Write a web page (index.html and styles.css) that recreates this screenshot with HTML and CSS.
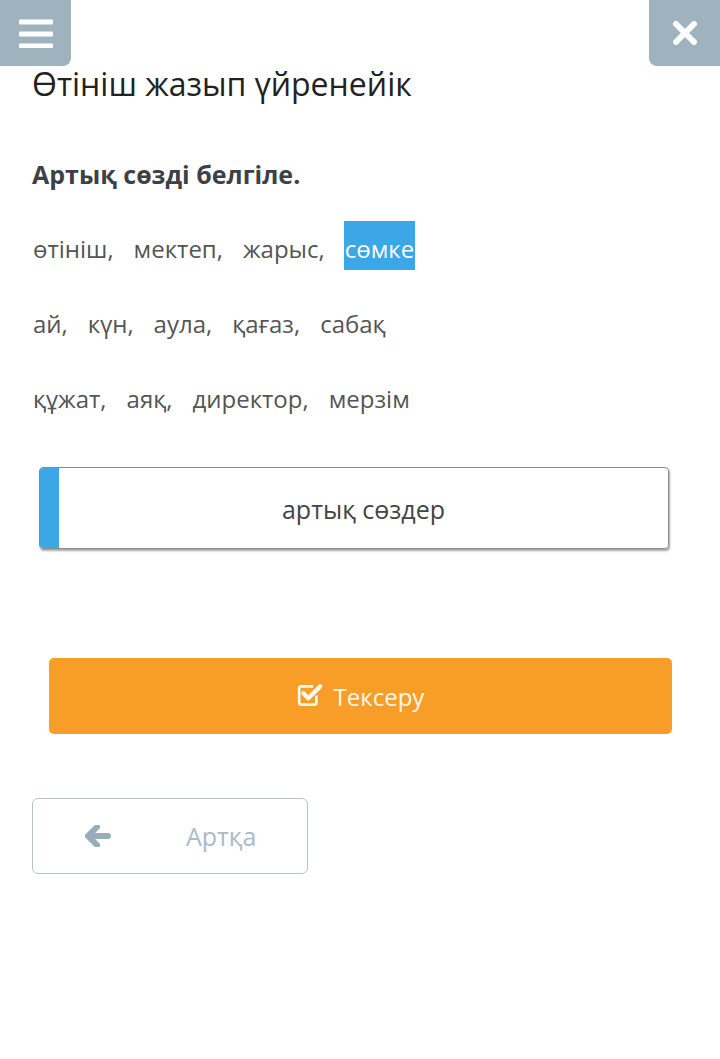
FILE: index.html
```html
<!DOCTYPE html>
<html lang="kk">
<head>
  <meta charset="UTF-8"/>
  <meta name="viewport" content="width=device-width, initial-scale=1.0"/>
  <title>Өтініш жазып үйренейік</title>
  <link rel="stylesheet" href="styles.css">
</head>
<body>
  <button class="corner-btn menu-btn" aria-label="Menu">
    <svg viewBox="0 0 34 28" class="menu-icon">
      <rect x="0" y="0" width="34" height="5" rx="1"/>
      <rect x="0" y="12" width="34" height="5" rx="1"/>
      <rect x="0" y="24" width="34" height="5" rx="1"/>
    </svg>
  </button>
  <button class="corner-btn close-btn" aria-label="Close">
    <svg viewBox="0 0 26 26" class="close-icon">
      <path d="M4 4 L22 22 M22 4 L4 22"/>
    </svg>
  </button>

  <main>
    <h1 class="title">Өтініш жазып үйренейік</h1>
    <p class="task">Артық сөзді белгіле.</p>

    <div class="rows">
      <div class="row">
        <span class="word">өтініш,</span>
        <span class="word">мектеп,</span>
        <span class="word">жарыс,</span>
        <span class="word selected">сөмке</span>
      </div>
      <div class="row">
        <span class="word">ай,</span>
        <span class="word">күн,</span>
        <span class="word">аула,</span>
        <span class="word">қағаз,</span>
        <span class="word">сабақ</span>
      </div>
      <div class="row">
        <span class="word">құжат,</span>
        <span class="word">аяқ,</span>
        <span class="word">директор,</span>
        <span class="word">мерзім</span>
      </div>
    </div>

    <div class="answer-box">
      <div class="answer-bar"></div>
      <div class="answer-text">артық сөздер</div>
    </div>

    <button class="check-btn">
      <svg viewBox="0 0 26 24" class="check-icon">
        <path class="box" d="M18 12.5 V19 a2 2 0 0 1 -2 2 H4 a2 2 0 0 1 -2 -2 V6 a2 2 0 0 1 2 -2 H15"/>
        <path class="tick" d="M6 10.5 L10.5 15 L21.5 4"/>
      </svg>
      Тексеру
    </button>

    <button class="back-btn">
      <svg viewBox="0 0 26 22" class="back-icon">
        <path d="M12 2 L3 11 L12 20 M4 11 H23"/>
      </svg>
      <span>Артқа</span>
    </button>
  </main>
</body>
</html>
```

FILE: styles.css
```css
* {
  margin: 0;
  padding: 0;
  box-sizing: border-box;
}

body {
  font-family: 'Open Sans', 'Noto Sans', sans-serif;
  background: #fff;
  color: #222;
  width: 720px;
  min-height: 1059px;
  position: relative;
}

button {
  font-family: inherit;
  cursor: pointer;
}

/* Top corner buttons lie over the page */
.corner-btn {
  position: absolute;
  top: 0;
  width: 71px;
  height: 66px;
  border: none;
  background: #9fb3bf;
  display: flex;
  align-items: center;
  justify-content: center;
}

.menu-btn {
  left: 0;
  border-radius: 0 0 8px 0;
}

.close-btn {
  right: 0;
  border-radius: 0 0 0 8px;
}

.menu-icon {
  width: 34px;
  height: 29px;
  fill: #fff;
}

.close-icon {
  width: 26px;
  height: 26px;
  stroke: #fff;
  stroke-width: 6;
  stroke-linecap: round;
  fill: none;
}

main {
  padding: 0 32px 0 32px;
}

.title {
  font-size: 32px;
  font-weight: 400;
  line-height: 42px;
  margin-top: 63px;
  color: #222;
}

.task {
  font-size: 25px;
  font-weight: 700;
  line-height: 32px;
  margin-top: 53px;
  color: #3b4147;
}

.rows {
  margin-top: 31px;
  display: flex;
  flex-direction: column;
  gap: 26px;
}

.row {
  display: flex;
  gap: 18px;
}

.word {
  font-size: 24px;
  line-height: 41px;
  padding: 7px 1px 0;
  height: 49px;
  color: #555;
}

.selected {
  background: #3ba7e6;
  color: #fff;
}

.answer-box {
  margin: 47px 0 0 7px;
  width: 630px;
  height: 82px;
  display: flex;
  border: 1px solid #8a8a8a;
  border-radius: 4px;
  overflow: hidden;
  box-shadow: 1px 2px 2px rgba(0, 0, 0, 0.35);
}

.answer-bar {
  width: 19px;
  background: #3ba7e6;
}

.answer-text {
  flex: 1;
  display: flex;
  align-items: center;
  justify-content: center;
  font-size: 25px;
  color: #444;
  padding-top: 2px;
}

.check-btn {
  margin: 109px 0 0 17px;
  width: 623px;
  height: 76px;
  border: none;
  border-radius: 5px;
  background: #f99d29;
  color: #fff9ec;
  font-size: 24px;
  display: flex;
  align-items: center;
  justify-content: center;
  gap: 9px;
}

.check-icon {
  width: 28px;
  height: 26px;
  fill: none;
  stroke: #fff9ec;
  margin-top: -2px;
}

.check-icon .box {
  stroke-width: 2.5;
}

.check-icon .tick {
  stroke-width: 4;
  stroke-linecap: round;
  stroke-linejoin: round;
}

.back-btn {
  margin-top: 64px;
  width: 276px;
  height: 76px;
  background: #fff;
  border: 1px solid #b4c3cd;
  border-radius: 6px;
  display: flex;
  align-items: center;
  padding-left: 52px;
  font-size: 25px;
  color: #a9bcc8;
}

.back-icon {
  width: 26px;
  height: 22px;
  fill: none;
  stroke: #98adbb;
  stroke-width: 6;
  stroke-linecap: round;
  stroke-linejoin: round;
}

.back-btn span {
  margin-left: 75px;
}
```
